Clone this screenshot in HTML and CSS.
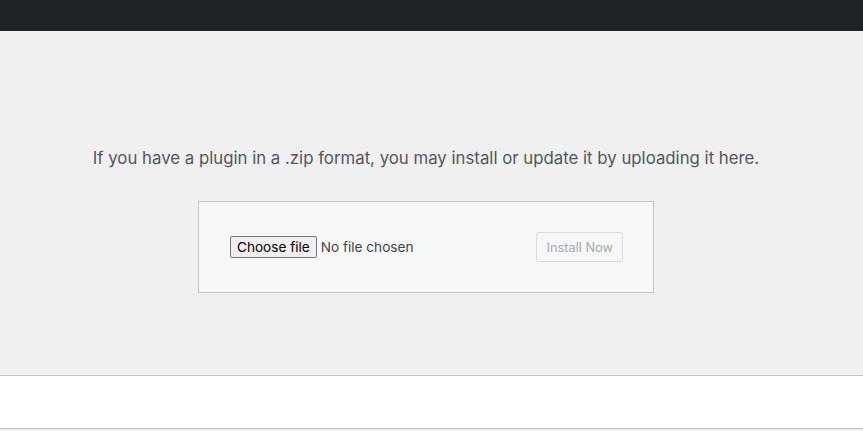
FILE: index.html
```html
<!DOCTYPE html>
<html lang="en">
<head>
  <meta charset="UTF-8">
  <meta name="viewport" content="width=device-width, initial-scale=1.0">
  <title>Upload Plugin</title>
  <link rel="stylesheet" href="styles.css">
</head>
<body>

  <div class="admin-bar"></div>

  <div class="upload-plugin">
    <p class="install-help">If you have a plugin in a .zip format, you may install or update it by uploading it here.</p>
    <form class="wp-upload-form">
      <div class="file-field">
        <label for="pluginzip" class="file-button">Choose file</label>
        <span class="file-name">No file chosen</span>
        <input type="file" id="pluginzip" name="pluginzip" accept=".zip">
      </div>
      <button type="submit" class="button" disabled>Install Now</button>
    </form>
  </div>

  <div class="filter-bar"></div>

</body>
</html>
```

FILE: styles.css
```css
body {
  margin: 0;
  font-family: "Inter", "Liberation Sans", Arial, sans-serif;
  background-color: #f0f0f1;
  color: #3c434a;
}
.admin-bar {
  height: 31px;
  background-color: #1d2327;
}
.upload-plugin {
  height: 344px;
  box-sizing: border-box;
  padding: 115px 11px 0 0;
  background-color: #f0f0f0;
}
.install-help {
  margin: 0 0 31px;
  text-align: center;
  font-size: 16.8px;
  line-height: 24px;
  color: #50575e;
}
.wp-upload-form {
  display: flex;
  align-items: center;
  justify-content: space-between;
  margin: 0 auto;
  padding: 30px 30px 30px 31px;
  box-sizing: border-box;
  width: 456px;
  height: 92px;
  background-color: #f6f7f7;
  border: 1px solid #c3c4c7;
}
.file-field {
  display: flex;
  align-items: center;
  font-size: 13.6px;
}
.file-field input {
  display: none;
}
.file-button {
  display: flex;
  align-items: center;
  box-sizing: border-box;
  height: 22px;
  padding: 0 6px;
  margin-right: 4px;
  color: #000;
  background-color: #efefef;
  border: 1px solid #767676;
  border-radius: 2px;
  cursor: default;
}
.file-name {
  color: #3c434a;
}
.button {
  height: 30px;
  padding: 0 9px;
  font-family: "Inter", "Liberation Sans", Arial, sans-serif;
  font-size: 12.8px;
  color: #a7aaad;
  background-color: #f6f7f7;
  border: 1px solid #dcdcde;
  border-radius: 3px;
}
.filter-bar {
  height: 52px;
  background-color: #fff;
  border-top: 1px solid #c3c4c7;
  border-bottom: 1px solid #c3c4c7;
}
```
